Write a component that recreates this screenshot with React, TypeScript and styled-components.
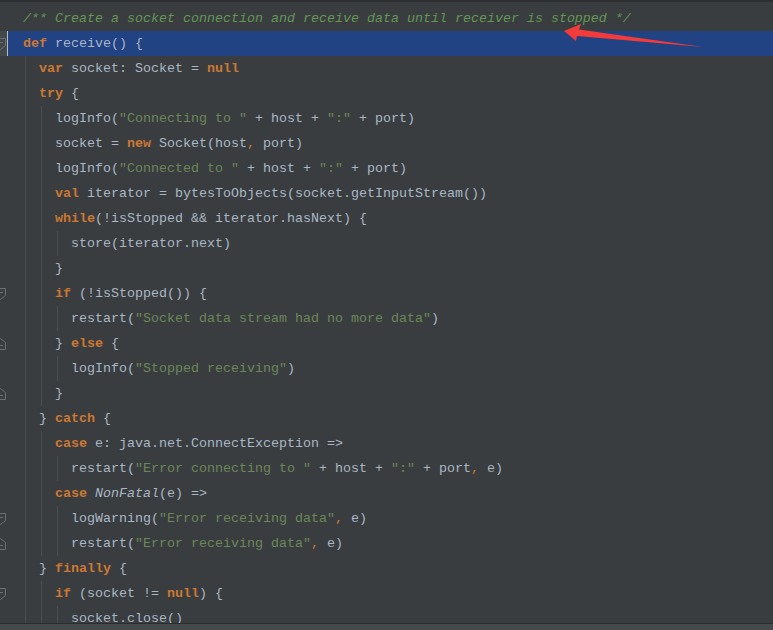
import { FunctionComponent } from "react";
import styled, { createGlobalStyle, css } from "styled-components";

const GlobalStyle = createGlobalStyle`
  html,
  body {
    margin: 0;
    padding: 0;
    background: #3a3d3f;
  }
`;

type Kind = "plain" | "kw" | "str" | "comma" | "italic" | "comment";

type Line = {
  level: number;
  text: string;
  fold?: "open" | "close";
  active?: boolean;
  comment?: boolean;
};

const LINES: Line[] = [
  { level: 0, text: "/** Create a socket connection and receive data until receiver is stopped */", comment: true },
  { level: 0, text: "def receive() {", active: true, fold: "open" },
  { level: 1, text: "var socket: Socket = null" },
  { level: 1, text: "try {" },
  { level: 2, text: 'logInfo("Connecting to " + host + ":" + port)' },
  { level: 2, text: "socket = new Socket(host, port)" },
  { level: 2, text: 'logInfo("Connected to " + host + ":" + port)' },
  { level: 2, text: "val iterator = bytesToObjects(socket.getInputStream())" },
  { level: 2, text: "while(!isStopped && iterator.hasNext) {" },
  { level: 3, text: "store(iterator.next)" },
  { level: 2, text: "}" },
  { level: 2, text: "if (!isStopped()) {", fold: "open" },
  { level: 3, text: 'restart("Socket data stream had no more data")' },
  { level: 2, text: "} else {", fold: "close" },
  { level: 3, text: 'logInfo("Stopped receiving")' },
  { level: 2, text: "}", fold: "close" },
  { level: 1, text: "} catch {" },
  { level: 2, text: "case e: java.net.ConnectException =>" },
  { level: 3, text: 'restart("Error connecting to " + host + ":" + port, e)' },
  { level: 2, text: "case NonFatal(e) =>" },
  { level: 3, text: 'logWarning("Error receiving data", e)', fold: "open" },
  { level: 3, text: 'restart("Error receiving data", e)', fold: "close" },
  { level: 1, text: "} finally {" },
  { level: 2, text: "if (socket != null) {", fold: "open" },
  { level: 3, text: "socket.close()" },
];

const KEYWORDS = new Set([
  "def",
  "var",
  "val",
  "null",
  "try",
  "new",
  "while",
  "if",
  "else",
  "catch",
  "case",
  "finally",
]);

// tiny scala-ish lexer, good enough for this snippet
const tokenize = (src: string): [Kind, string][] => {
  const out: [Kind, string][] = [];
  const re = /"[^"]*"|[A-Za-z_]\w*|,|[^"A-Za-z_,]+/g;
  let m: RegExpExecArray | null;
  while ((m = re.exec(src))) {
    const t = m[0];
    if (t.startsWith('"')) out.push(["str", t]);
    else if (KEYWORDS.has(t)) out.push(["kw", t]);
    else if (t === "NonFatal") out.push(["italic", t]);
    else if (t === ",") out.push(["comma", t]);
    else out.push(["plain", t]);
  }
  return out;
};

const Page = styled.div`
  position: relative;
  width: 773px;
  height: 630px;
  overflow: hidden;
  display: flex;
  flex-direction: column;
  background: #3a3d3f;
  font-family: "Liberation Mono", "DejaVu Sans Mono", monospace;
  font-size: 13.33px;
  color: #a9b7c6;
`;

const TopEdge = styled.div`
  height: 2px;
  flex-shrink: 0;
  background: #2c2e2f;
`;

const Editor = styled.div`
  flex: 1;
  overflow: hidden;
  padding-top: 4px;
  display: flex;
  flex-direction: column;
`;

const BottomEdge = styled.div`
  height: 1px;
  flex-shrink: 0;
  background: #2a2c2d;
`;

const StatusStrip = styled.div`
  height: 6px;
  flex-shrink: 0;
  background: #46494b;
`;

const Row = styled.div`
  display: flex;
  height: 25px;
  flex-shrink: 0;
  align-items: stretch;
`;

const Gutter = styled.div<{ $active?: boolean }>`
  width: 7px;
  flex-shrink: 0;
  display: flex;
  align-items: center;
  overflow: hidden;
  background: ${(p) => (p.$active ? "#45484a" : "transparent")};
`;

const Code = styled.div<{ $active?: boolean }>`
  flex: 1;
  display: flex;
  align-items: center;
  white-space: pre;
  padding-left: 16px;
  ${(p) =>
    p.$active &&
    css`
      background: #214283;
      border-left: 1px solid #b9bcbe;
      padding-left: 15px;
    `}
`;

const IndentUnit = styled.span`
  display: inline-block;
  width: 16px;
  align-self: stretch;
  flex-shrink: 0;
  background: linear-gradient(
    to right,
    transparent 2px,
    #4a4d50 2px,
    #4a4d50 3px,
    transparent 3px
  );
`;

const Tok = styled.span<{ $kind: Kind }>`
  ${(p) => {
    switch (p.$kind) {
      case "kw":
        return css`
          color: #cc7832;
          font-weight: bold;
        `;
      case "str":
        return css`
          color: #6a8759;
        `;
      case "comma":
        return css`
          color: #cc7832;
        `;
      case "italic":
        return css`
          font-style: italic;
        `;
      case "comment":
        return css`
          color: #629755;
          font-style: italic;
        `;
      default:
        return css`
          color: #a9b7c6;
        `;
    }
  }}
`;

const ArrowLayer = styled.svg`
  position: absolute;
  left: 0;
  top: 0;
  pointer-events: none;
`;

const FoldMark: FunctionComponent<{ kind: "open" | "close" }> = ({ kind }) => (
  <svg width="7" height="14" viewBox="0 0 7 14">
    <g transform={kind === "close" ? "translate(0 14) scale(1 -1)" : undefined}>
      <path
        d="M-5 1.5 H5.5 V8.5 L0.5 12.5 L-5 8.5 Z"
        fill="none"
        stroke="#6d7072"
        strokeWidth="1"
      />
      <path d="M-2 5.5 H3" stroke="#6d7072" strokeWidth="1" />
    </g>
  </svg>
);

const CodeLine: FunctionComponent<{ line: Line }> = ({ line }) => (
  <Row>
    <Gutter $active={line.active}>
      {line.fold && <FoldMark kind={line.fold} />}
    </Gutter>
    <Code $active={line.active}>
      {Array.from({ length: line.level }).map((_, i) => (
        <IndentUnit key={i} />
      ))}
      {line.comment ? (
        <Tok $kind="comment">{line.text}</Tok>
      ) : (
        tokenize(line.text).map(([k, t], i) => (
          <Tok key={i} $kind={k}>
            {t}
          </Tok>
        ))
      )}
    </Code>
  </Row>
);

const App: FunctionComponent = () => {
  return (
    <>
      <GlobalStyle />
      <Page>
        <TopEdge />
        <Editor>
          {LINES.map((l, i) => (
            <CodeLine key={i} line={l} />
          ))}
        </Editor>
        <BottomEdge />
        <StatusStrip />
        <ArrowLayer width="773" height="630" viewBox="0 0 773 630">
          <polygon
            points="564,31 581,24 579,29.5 703,47 577,36 576,41"
            fill="#f23b3b"
          />
        </ArrowLayer>
      </Page>
    </>
  );
};

export default App;
